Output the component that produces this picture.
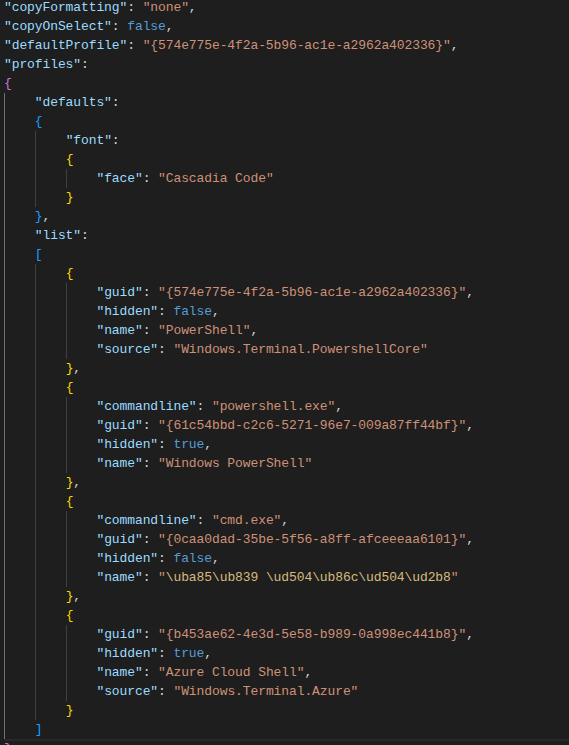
import type React from "react"

type Tok = [string, string]
type Line = { indent: number; toks: Tok[]; current?: boolean }

// token colours, dark+ style
const colors: Record<string, string> = {
  k: "text-[#9cdcfe]",
  p: "text-[#d4d4d4]",
  s: "text-[#ce9178]",
  e: "text-[#d7ba7d]",
  b: "text-[#569cd6]",
  y: "text-[#ffd700]",
  o: "text-[#da70d6]",
  u: "text-[#179fff]",
}

const L = (indent: number, ...toks: Tok[]): Line => ({ indent, toks })
const key = (indent: number, name: string, value?: Tok[], comma = false): Line =>
  L(
    indent,
    ["k", `"${name}"`],
    ["p", value ? ": " : ":"],
    ...(value ?? []),
    ...(comma ? ([["p", ","]] as Tok[]) : [])
  )
const str = (v: string): Tok[] => [["s", `"${v}"`]]
const bool = (v: string): Tok[] => [["b", v]]

const lines: Line[] = [
  key(0, "copyFormatting", str("none"), true),
  key(0, "copyOnSelect", bool("false"), true),
  key(0, "defaultProfile", str("{574e775e-4f2a-5b96-ac1e-a2962a402336}"), true),
  key(0, "profiles"),
  L(0, ["o", "{"]),
  key(1, "defaults"),
  L(1, ["u", "{"]),
  key(2, "font"),
  L(2, ["y", "{"]),
  key(3, "face", str("Cascadia Code")),
  L(2, ["y", "}"]),
  L(1, ["u", "}"], ["p", ","]),
  key(1, "list"),
  L(1, ["u", "["]),
  L(2, ["y", "{"]),
  key(3, "guid", str("{574e775e-4f2a-5b96-ac1e-a2962a402336}"), true),
  key(3, "hidden", bool("false"), true),
  key(3, "name", str("PowerShell"), true),
  key(3, "source", str("Windows.Terminal.PowershellCore")),
  L(2, ["y", "}"], ["p", ","]),
  L(2, ["y", "{"]),
  key(3, "commandline", str("powershell.exe"), true),
  key(3, "guid", str("{61c54bbd-c2c6-5271-96e7-009a87ff44bf}"), true),
  key(3, "hidden", bool("true"), true),
  key(3, "name", str("Windows PowerShell")),
  L(2, ["y", "}"], ["p", ","]),
  L(2, ["y", "{"]),
  key(3, "commandline", str("cmd.exe"), true),
  key(3, "guid", str("{0caa0dad-35be-5f56-a8ff-afceeeaa6101}"), true),
  key(3, "hidden", bool("false"), true),
  key(3, "name", [
    ["s", '"'],
    ["e", "\\uba85"],
    ["e", "\\ub839"],
    ["s", " "],
    ["e", "\\ud504"],
    ["e", "\\ub86c"],
    ["e", "\\ud504"],
    ["e", "\\ud2b8"],
    ["s", '"'],
  ]),
  L(2, ["y", "}"], ["p", ","]),
  L(2, ["y", "{"]),
  key(3, "guid", str("{b453ae62-4e3d-5e58-b989-0a998ec441b8}"), true),
  key(3, "hidden", bool("true"), true),
  key(3, "name", str("Azure Cloud Shell"), true),
  key(3, "source", str("Windows.Terminal.Azure")),
  L(2, ["y", "}"]),
  L(1, ["u", "]"]),
  { ...L(0, ["o", "}"]), current: true },
]

function Indent({ level }: { level: number }) {
  // level 0 guide belongs to the bracket pair under the cursor, so it is brighter
  return (
    <span
      className={
        level === 0
          ? "inline-block h-[19px] align-top shadow-[inset_1px_0_0_#707070]"
          : "inline-block h-[19px] align-top shadow-[inset_1px_0_0_#404040]"
      }
    >
      {"    "}
    </span>
  )
}

function CodeLine({ line }: { line: Line }) {
  return (
    <div
      className={
        line.current
          ? "relative h-[19px] whitespace-pre leading-[19px] shadow-[inset_0_2px_0_#282828]"
          : "h-[19px] whitespace-pre leading-[19px]"
      }
    >
      {Array.from({ length: line.indent }).map((_, i) => (
        <Indent key={i} level={i} />
      ))}
      {line.toks.map(([t, text], i) => (
        <span key={i} className={colors[t]}>
          {text}
        </span>
      ))}
    </div>
  )
}

export default function App() {
  const style: React.CSSProperties = {}
  return (
    <div className="h-[745px] w-[569px] overflow-hidden bg-[#1e1e1e]" style={style}>
      <div className="-mt-[2px] pl-[4px] font-['Liberation_Mono',monospace] text-[13px] tracking-[-0.1px]">
        {lines.map((line, i) => (
          <CodeLine key={i} line={line} />
        ))}
      </div>
    </div>
  )
}
